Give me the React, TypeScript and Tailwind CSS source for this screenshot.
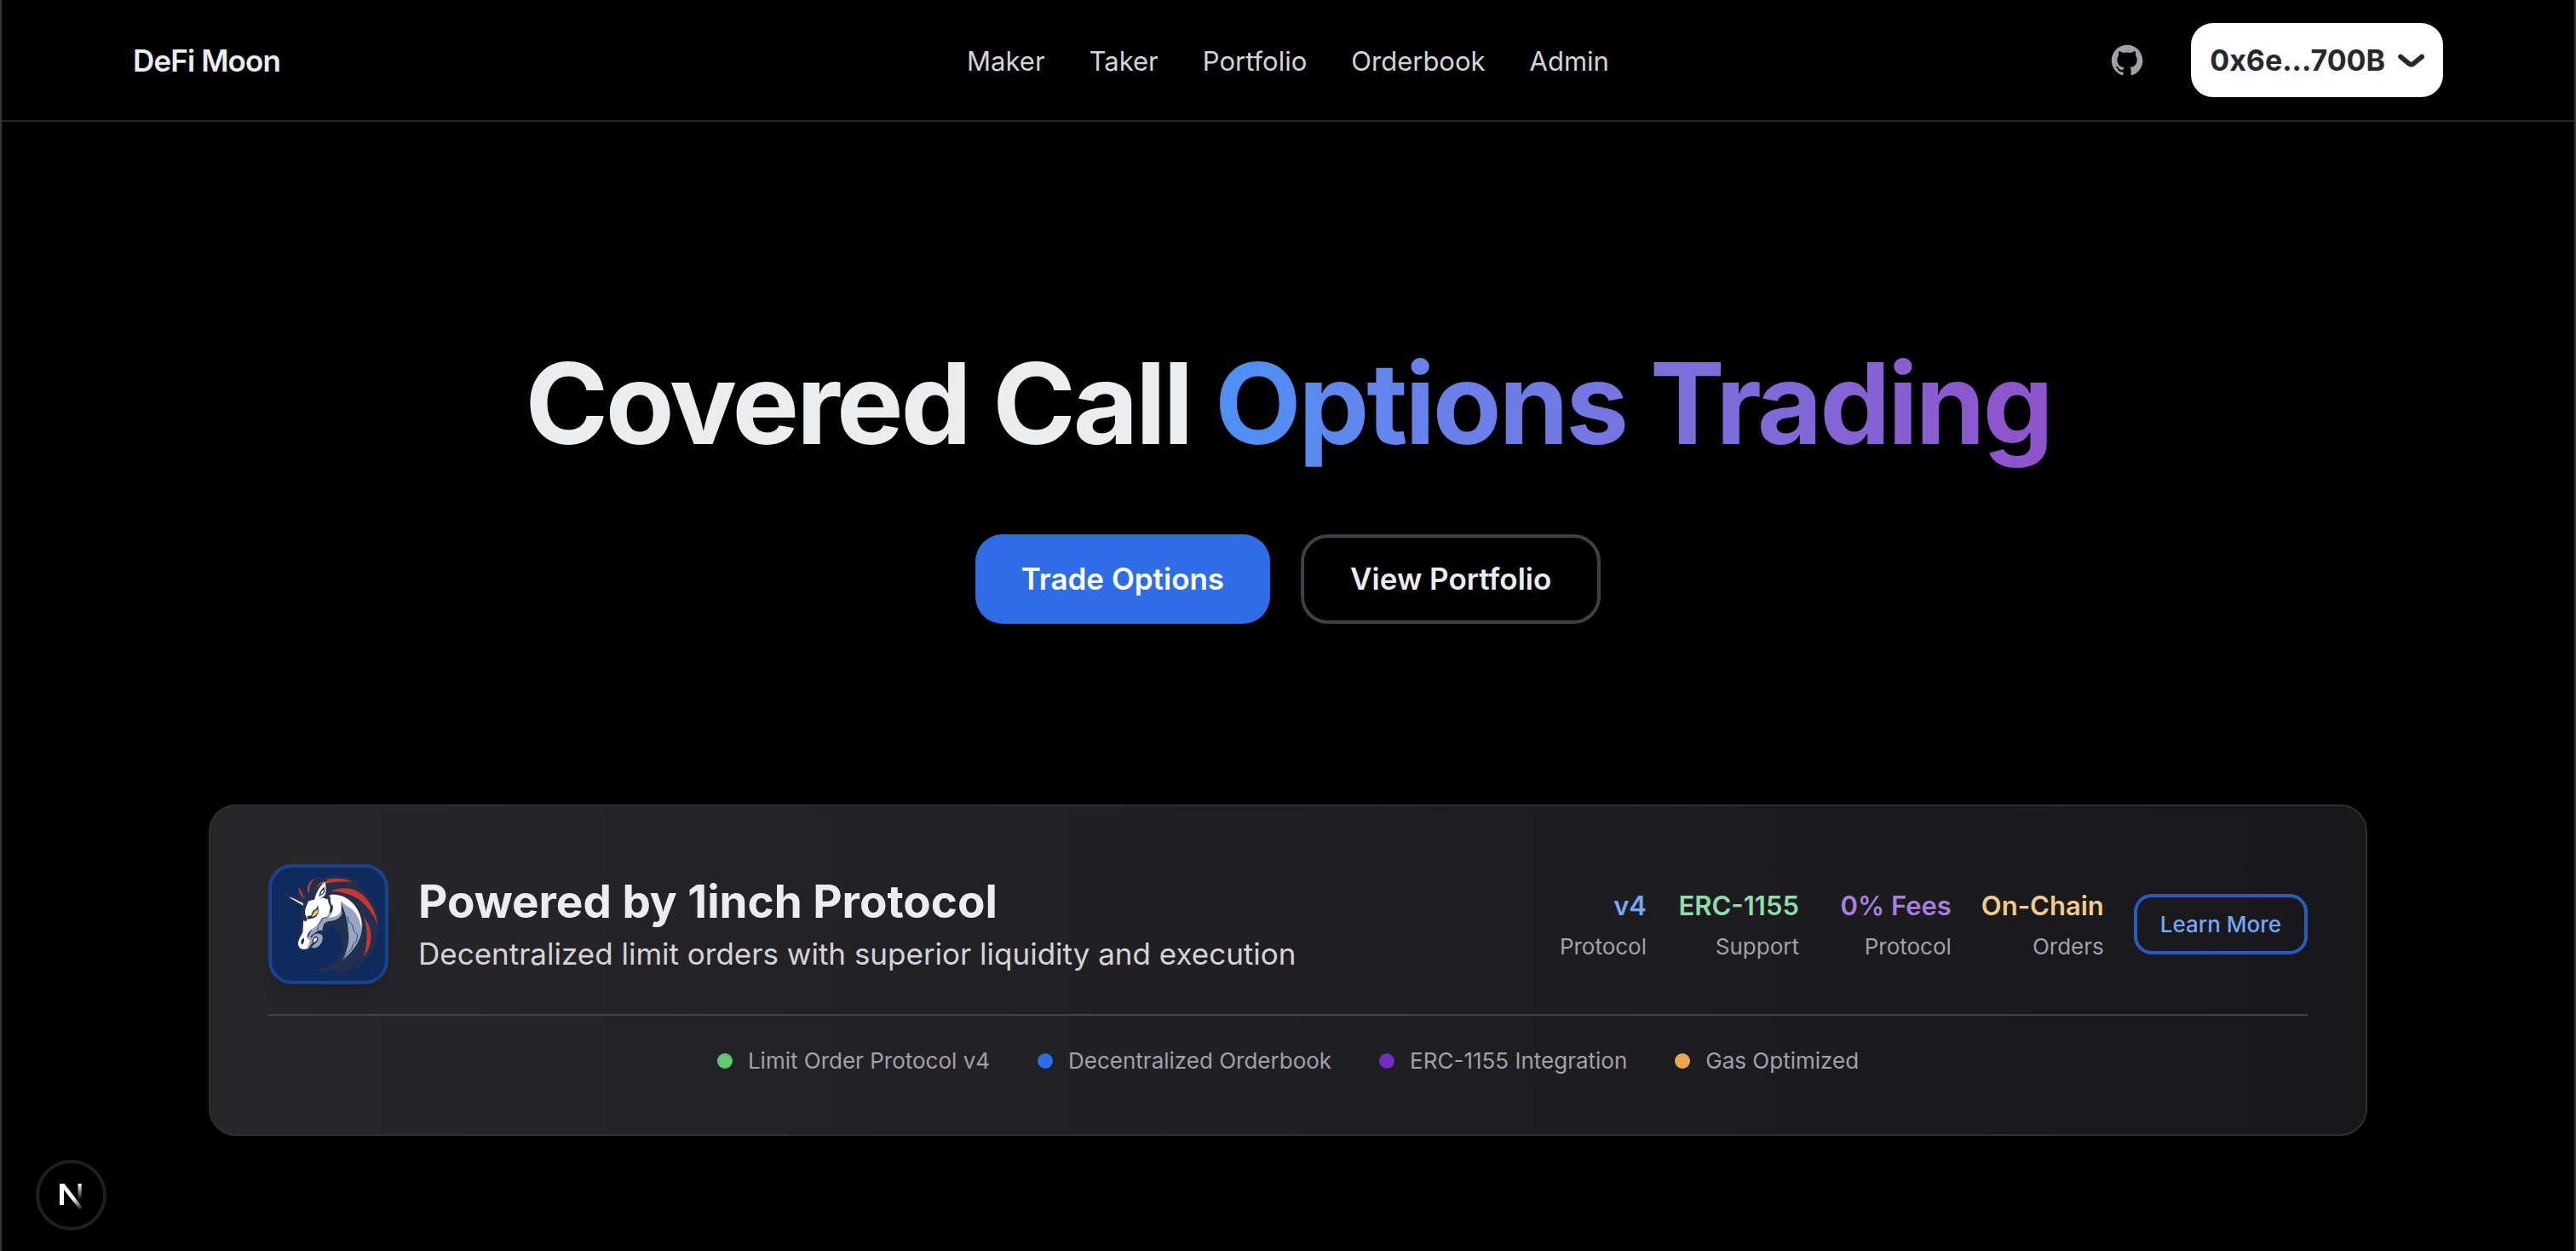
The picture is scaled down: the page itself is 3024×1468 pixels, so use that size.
import React from "react";

const navItems = ["Maker", "Taker", "Portfolio", "Orderbook", "Admin"];

const stats = [
  { value: "v4", label: "Protocol", color: "text-[#73a7f7]" },
  { value: "ERC-1155", label: "Support", color: "text-[#8fdda8]" },
  { value: "0% Fees", label: "Protocol", color: "text-[#a77fdc]" },
  { value: "On-Chain", label: "Orders", color: "text-[#f3cb85]" },
];

const features = [
  { label: "Limit Order Protocol v4", dot: "bg-[#5fca72]" },
  { label: "Decentralized Orderbook", dot: "bg-[#2f6de6]" },
  { label: "ERC-1155 Integration", dot: "bg-[#722cc4]" },
  { label: "Gas Optimized", dot: "bg-[#eaa846]" },
];

function GithubIcon() {
  return (
    <svg viewBox="0 0 24 24" className="size-11" fill="currentColor" aria-hidden="true">
      <path d="M12.026 2c-5.509 0-9.974 4.465-9.974 9.974 0 4.406 2.857 8.145 6.821 9.465.499.09.679-.217.679-.481 0-.237-.008-.865-.011-1.696-2.775.602-3.361-1.338-3.361-1.338-.452-1.152-1.107-1.459-1.107-1.459-.905-.619.069-.605.069-.605 1.002.07 1.527 1.028 1.527 1.028.89 1.524 2.336 1.084 2.902.829.091-.645.351-1.085.635-1.334-2.214-.251-4.542-1.107-4.542-4.93 0-1.087.389-1.979 1.024-2.675-.101-.253-.446-1.268.099-2.64 0 0 .837-.269 2.742 1.021a9.582 9.582 0 0 1 2.496-.336 9.554 9.554 0 0 1 2.496.336c1.906-1.291 2.742-1.021 2.742-1.021.545 1.372.203 2.387.099 2.64.64.696 1.024 1.587 1.024 2.675 0 3.833-2.33 4.675-4.552 4.922.355.308.675.916.675 1.846 0 1.334-.012 2.41-.012 2.737 0 .267.178.577.687.479C19.146 20.115 22 16.379 22 11.974 22 6.465 17.535 2 12.026 2z" />
    </svg>
  );
}

function ChevronIcon() {
  return (
    <svg viewBox="0 0 14 7" className="h-4 w-8" fill="none" aria-hidden="true">
      <path
        d="M12.75 1.54L8.516 5.004c-.736.602-1.796.602-2.532 0L1.75 1.54"
        stroke="currentColor"
        strokeWidth="2.5"
        strokeLinecap="round"
        strokeLinejoin="round"
      />
    </svg>
  );
}

function UnicornLogo() {
  return (
    <svg viewBox="51 48 411 411" className="size-full" role="img" aria-label="1inch">
      <path
        fill="#22304f"
        d="M70 132 L150 158 C144 138 145 118 153 102 C155 114 157 120 162 127 L176 136 C178 108 196 88 230 77 C222 86 219 92 217 99 C250 76 300 74 335 86 C352 92 364 100 380 113 L354 109 C402 132 440 190 438 240 L445 278 L435 266 C438 312 424 350 402 374 L410 350 C398 380 378 402 357 420 L360 404 C342 418 320 429 288 431 L300 420 C262 426 226 424 195 417 C252 418 300 392 305 332 C306 300 290 268 268 262 L236 288 C242 312 232 338 206 345 L188 342 C176 352 152 350 142 334 C136 312 150 292 155 272 C155 254 164 246 160 226 C152 212 152 202 162 190 Z"
      />
      <g fill="#c9362f">
        <path d="M149 119 C148 136 155 154 171 161 C163 149 158 138 156 130 C152 127 150 123 149 119 Z" />
        <path d="M206 88 C188 97 178 112 181 136 L187 140 C187 118 193 102 206 88 Z" />
        <path d="M213 124 C216 110 224 102 240 98 L242 104 C230 108 220 114 213 124 Z" />
        <path d="M246 104 L252 92 C280 84 314 86 343 100 C310 97 280 99 246 106 Z" />
        <path d="M266 133 C300 120 345 118 378 145 C408 170 430 210 434 253 C416 210 384 166 340 149 C316 140 292 134 266 133 Z" />
        <path d="M385 229 C415 262 424 320 385 372 C400 322 400 270 385 229 Z" />
      </g>
      <path
        fill="#98a5c3"
        d="M260 148 C272 143 284 146 288 150 C336 160 374 200 379 250 C382 306 350 350 306 386 C324 350 336 316 328 276 C328 244 316 206 302 176 L306 216 C296 240 270 242 252 244 L240 252 L234 276 L220 276 L190 298 L196 302 C204 284 224 284 234 294 C240 310 228 336 208 340 L194 338 L208 322 L196 324 L182 344 L160 344 Z"
      />
      <path
        fill="#fff"
        d="M114 156 L124 158 L164 177 L166 186 L158 182 Z M206 166 C212 136 228 112 245 99 C248 118 248 136 246 144 C240 156 224 164 206 166 Z M176 190 L184 170 L206 164 L240 158 L256 166 L264 186 L258 214 L250 228 L230 232 L216 258 L196 272 C186 280 178 292 180 304 L190 312 L180 340 C168 348 150 346 147 326 C146 308 160 296 164 280 L166 240 L176 244 L180 232 C170 220 170 204 176 190 Z M264 148 C290 144 316 152 334 168 C364 192 380 230 376 270 C370 226 350 198 318 184 L300 168 C304 190 304 200 298 214 C286 228 266 228 258 230 L270 212 L274 184 L264 176 Z"
      />
      <path fill="#22304f" d="M222 154 C224 136 232 126 242 118 C244 130 244 138 238 144 Z" />
      <path fill="#fff" d="M228 147 C230 138 233 132 238 128 C239 136 238 140 234 143 Z" />
      <path fill="#22304f" d="M254 152 L262 154 L266 184 L274 190 L270 208 L260 214 L264 192 L257 176 Z" />
      <path fill="#22304f" d="M219 184 L212 198 C202 202 196 210 194 222 L180 224 L182 236 L200 232 C214 230 222 216 220 198 Z" />
      <path fill="#f2c63c" d="M218 200 C220 214 212 224 197 227 C198 214 206 204 218 200 Z" />
      <path
        fill="none"
        stroke="#22304f"
        strokeWidth="2.5"
        d="M252 228 L236 232 L230 244 L220 256 L216 274 M326 224 L330 244 L344 256 L348 276 L362 292 L358 316 L346 326 L340 344 L322 362 L308 384"
      />
      <path fill="#22304f" d="M160 328 C154 318 158 308 168 304 C170 314 168 324 160 328 Z" />
      <path fill="#22304f" d="M200 328 C194 310 204 296 214 298 C226 306 216 322 200 328 Z" />
      <path fill="#fff" d="M204 320 C200 308 206 302 213 303 C219 308 212 316 204 320 Z" />
    </svg>
  );
}

function NextBadge() {
  return (
    <button
      type="button"
      aria-label="Open Next.js Dev Tools"
      className="fixed bottom-6 left-[42px] flex size-[83px] items-center justify-center rounded-full border-4 border-[#1f1f1f] bg-black"
    >
      <svg viewBox="0 0 30 34" className="h-[34px] w-[30px]" fill="none" aria-hidden="true">
        <defs>
          <linearGradient id="nextDiagonal" x1="18" y1="20" x2="28" y2="33" gradientUnits="userSpaceOnUse">
            <stop stopColor="#fff" />
            <stop offset="1" stopColor="#fff" stopOpacity="0" />
          </linearGradient>
          <linearGradient id="nextStem" x1="24" y1="3" x2="24" y2="22" gradientUnits="userSpaceOnUse">
            <stop stopColor="#fff" />
            <stop offset="1" stopColor="#fff" stopOpacity="0" />
          </linearGradient>
        </defs>
        <path d="M1 3h5v25H1z" fill="#fff" />
        <path d="M1 3h5.5L28.5 31.5L25 34L1 4z" fill="url(#nextDiagonal)" />
        <path d="M22.5 3h4.200v19h-4.200z" fill="url(#nextStem)" />
      </svg>
    </button>
  );
}

export default function App() {
  return (
    <div className="flex min-h-screen flex-col border-x-2 border-[#333333] bg-black font-['Inter',sans-serif] text-[#ecedee]">
      <header className="border-b-2 border-[#27272a]">
        <div className="mx-auto grid h-[141px] w-full max-w-[2712px] grid-cols-[1fr_auto_1fr] items-center">
          <a href="#" className="justify-self-start text-[35px] leading-[52px] font-semibold tracking-tight">
            DeFi Moon
          </a>
          <nav className="flex gap-[52px] pt-0.5">
            {navItems.map((item) => (
              <a key={item} href="#" className="text-[31px] leading-[44px] text-[#d4d4d8]">
                {item}
              </a>
            ))}
          </nav>
          <div className="flex items-center gap-[53px] justify-self-end">
            <a href="#" aria-label="GitHub" className="text-[#a1a1aa]">
              <GithubIcon />
            </a>
            <button
              type="button"
              className="flex h-[87px] items-center gap-3.5 rounded-[26px] bg-white px-[22px] text-[34px] leading-[42px] font-bold text-[#25292e]"
            >
              0x6e...700B
              <ChevronIcon />
            </button>
          </div>
        </div>
      </header>

      <main className="mx-auto flex w-full max-w-[2534px] flex-col">
        <section className="flex flex-col items-center pt-[258px]">
          <h1 className="text-center text-[132px] leading-[144px] font-bold tracking-tight">
            Covered Call{" "}
            <span className="bg-gradient-to-r from-[#4b91f5] to-[#8f52ca] bg-clip-text text-transparent">
              Options Trading
            </span>
          </h1>
          <div className="mt-[82px] flex gap-9">
            <button
              type="button"
              className="h-[105px] rounded-[32px] bg-[#2f6de6] px-[54px] text-[35px] font-semibold text-white"
            >
              Trade Options
            </button>
            <button
              type="button"
              className="h-[105px] rounded-[32px] border-4 border-[#3f3f46] px-[54px] text-[35px] font-semibold"
            >
              View Portfolio
            </button>
          </div>
        </section>

        <section className="mt-[212px] rounded-[32px] border-2 border-[#2f2f32] bg-gradient-to-r from-[#27272a] to-[#18181b] p-[68px]">
          <div className="flex items-center justify-between border-b-2 border-[#424244] pb-[35px]">
            <div className="flex items-center gap-[35px]">
              <div className="size-[141px] overflow-hidden rounded-[28px] border-4 border-[#1b428e] bg-[#0f2a5c] shadow-xl">
                <UnicornLogo />
              </div>
              <div>
                <h2 className="text-[53px] leading-[68px] font-bold">Powered by 1inch Protocol</h2>
                <p className="text-[35px] leading-[54px] text-[#d4d4d8]">
                  Decentralized limit orders with superior liquidity and execution
                </p>
              </div>
            </div>
            <div className="flex items-center gap-[35px]">
              <dl className="grid grid-cols-4 gap-[35px] text-right">
                {stats.map((stat) => (
                  <div key={stat.value} className="flex flex-col">
                    <dt className={`text-[31px] leading-[52px] font-semibold whitespace-nowrap ${stat.color}`}>
                      {stat.value}
                    </dt>
                    <dd className="text-[26px] leading-[44px] text-[#a1a1aa]">{stat.label}</dd>
                  </div>
                ))}
              </dl>
              <button
                type="button"
                className="h-[71px] rounded-[21px] border-4 border-[#245cc4] px-[27px] text-[26px] font-medium whitespace-nowrap text-[#73a7f7]"
              >
                Learn More
              </button>
            </div>
          </div>
          <ul className="flex justify-center gap-14 pt-[35px]">
            {features.map((feature) => (
              <li key={feature.label} className="flex items-center gap-[18px] text-[26px] leading-9 text-[#a1a1aa]">
                <span className={`size-[18px] rounded-full ${feature.dot}`} />
                {feature.label}
              </li>
            ))}
          </ul>
        </section>
      </main>

      <NextBadge />
    </div>
  );
}
